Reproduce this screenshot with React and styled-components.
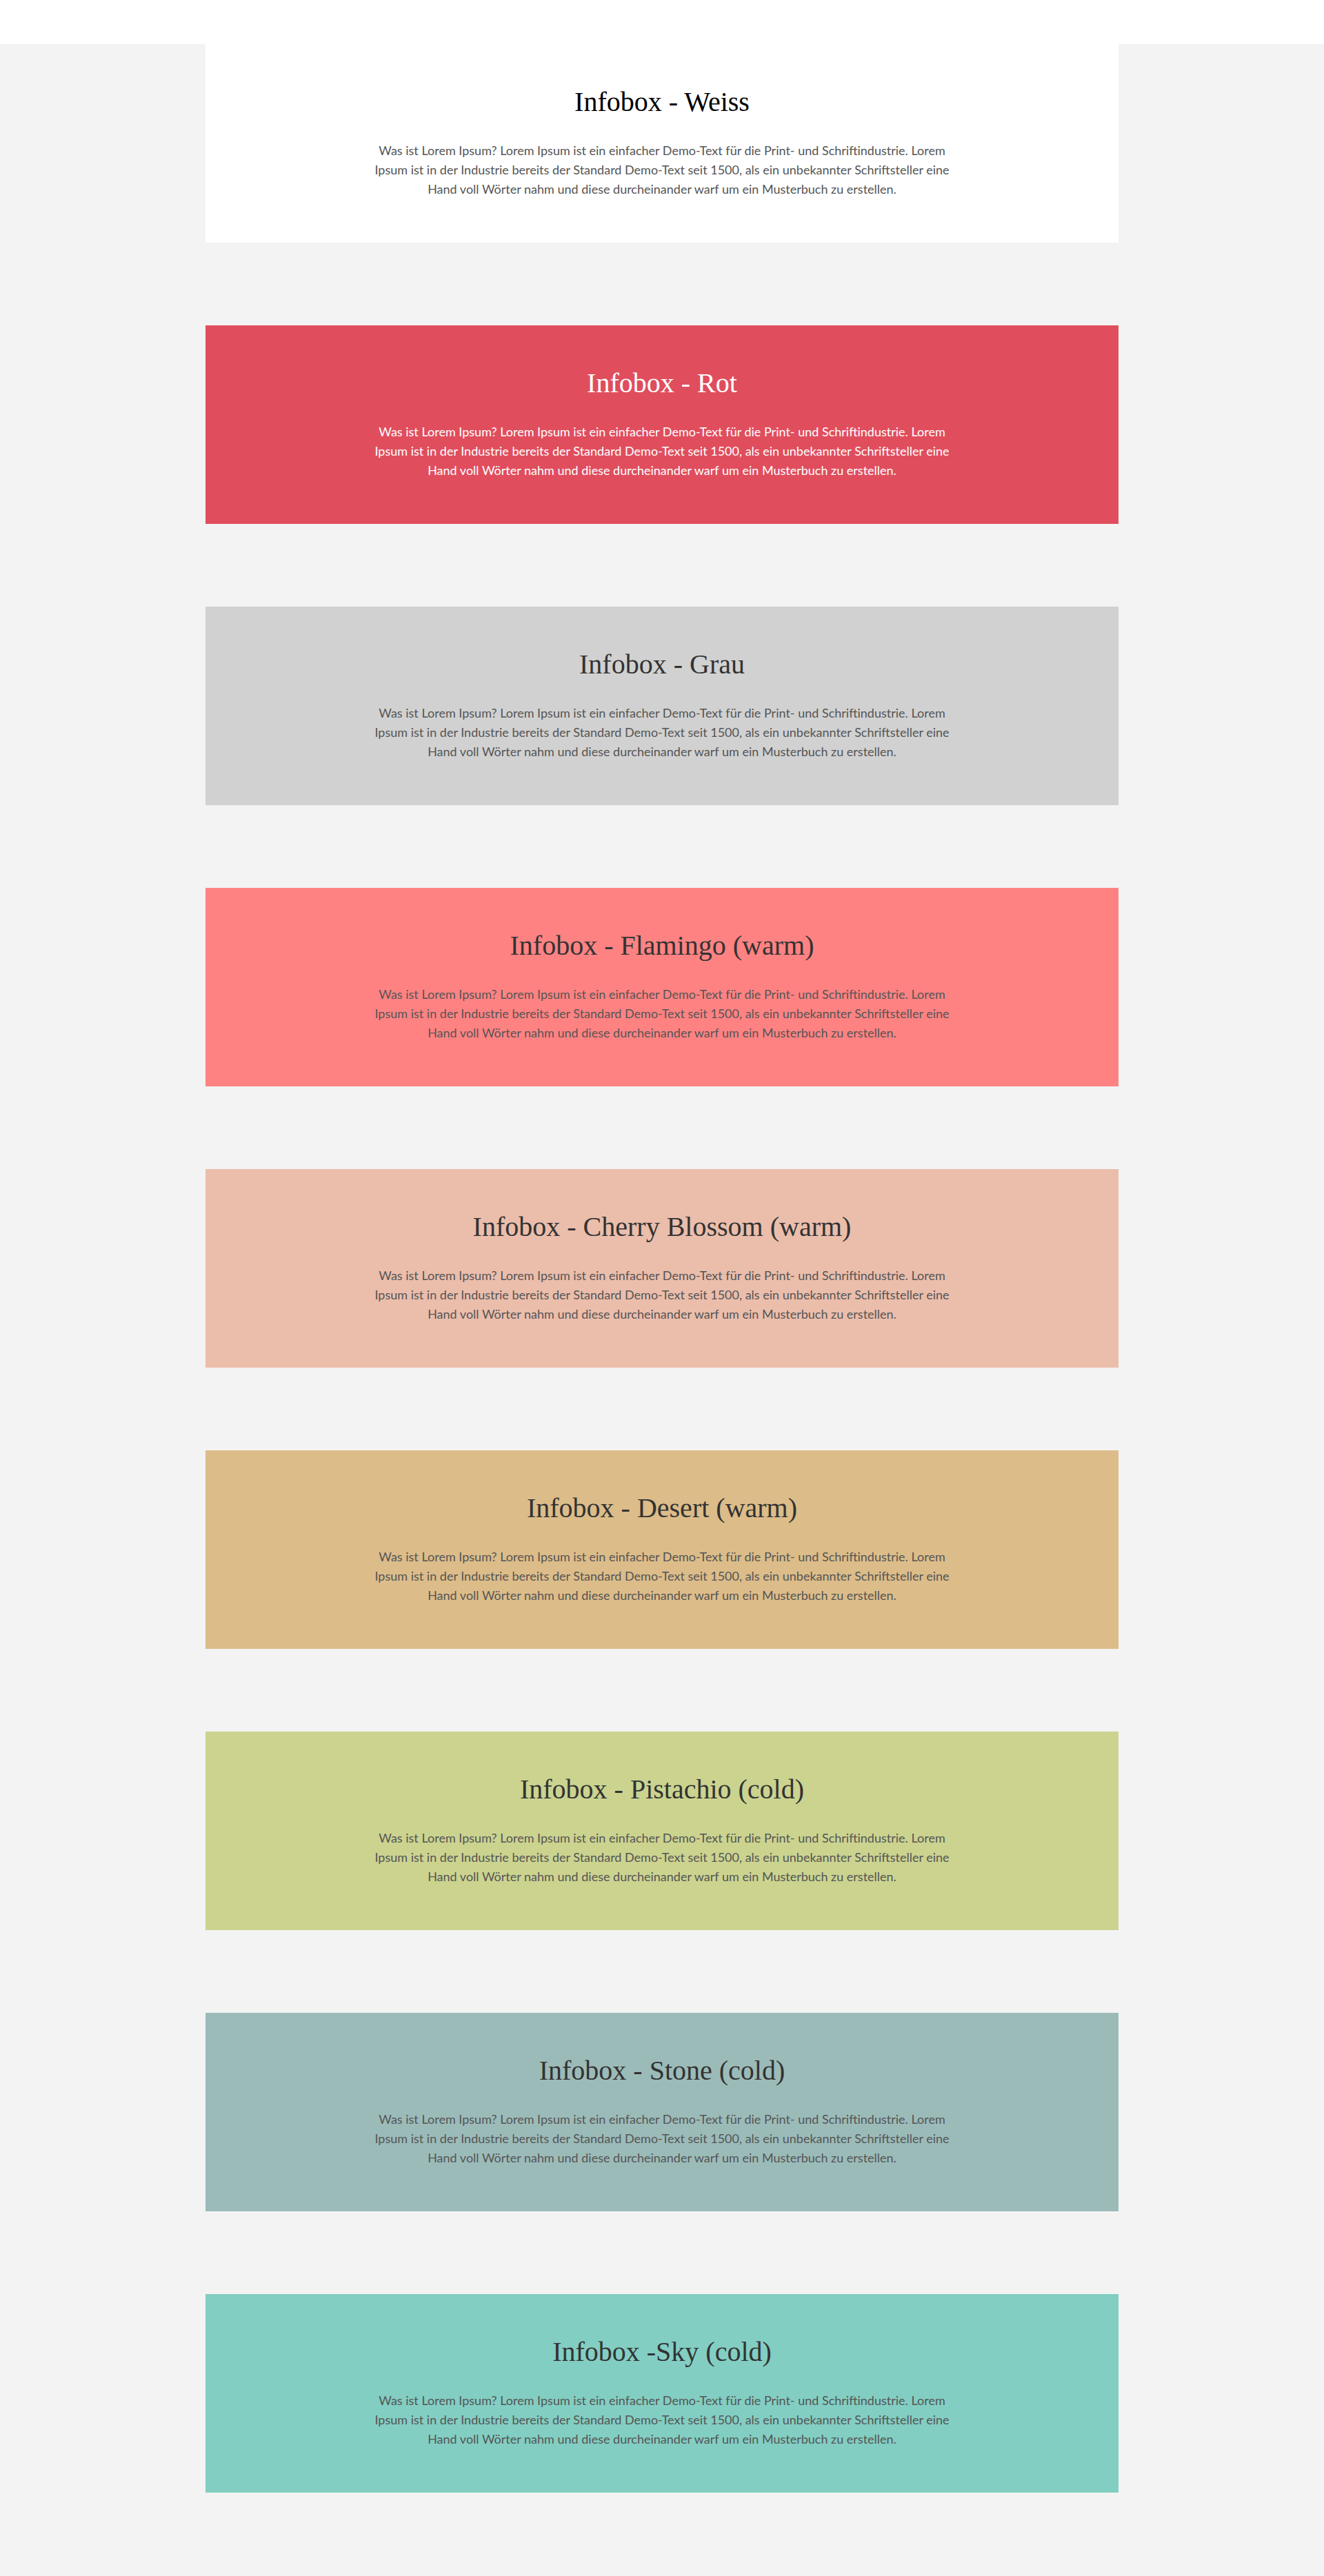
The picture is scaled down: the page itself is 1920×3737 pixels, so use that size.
import React from 'react';
import styled, { createGlobalStyle } from 'styled-components';

const GlobalStyle = createGlobalStyle`
  body {
    margin: 0;
    background-color: #f3f3f3;
    font-family: 'Lato', 'Liberation Sans', sans-serif;
  }
`;

const TopBar = styled.div`
  height: 64px;
  background-color: white;
`;

const Column = styled.main`
  width: 1324px;
  margin: 0 auto;
  display: flex;
  flex-direction: column;
  gap: 120px;
  padding-bottom: 121px;
`;

const Box = styled.section`
  height: 288px;
  box-sizing: border-box;
  padding: 60px 40px 0;
  display: flex;
  flex-direction: column;
  align-items: center;
  background-color: ${({ bg }) => bg};
`;

const Title = styled.h2`
  margin: 0;
  font-family: 'Liberation Serif', serif;
  font-weight: 400;
  font-size: 40px;
  line-height: 48px;
  color: ${({ color }) => color};
`;

const Text = styled.p`
  margin: 32px 0 0;
  max-width: 872px;
  text-align: center;
  font-size: 18px;
  line-height: 28px;
  color: ${({ color }) => color};
`;

const lorem =
  'Was ist Lorem Ipsum? Lorem Ipsum ist ein einfacher Demo-Text für die Print- und Schriftindustrie. Lorem Ipsum ist in der Industrie bereits der Standard Demo-Text seit 1500, als ein unbekannter Schriftsteller eine Hand voll Wörter nahm und diese durcheinander warf um ein Musterbuch zu erstellen.';

const boxes = [
  { title: 'Infobox - Weiss', bg: '#ffffff', titleColor: '#000', textColor: '#555' },
  { title: 'Infobox - Rot', bg: '#e04e5e', titleColor: '#fff', textColor: '#fff' },
  { title: 'Infobox - Grau', bg: '#d1d1d1', titleColor: '#333', textColor: '#555' },
  { title: 'Infobox - Flamingo (warm)', bg: '#fe8282', titleColor: '#333', textColor: '#555' },
  { title: 'Infobox - Cherry Blossom (warm)', bg: '#ebbdab', titleColor: '#333', textColor: '#555' },
  { title: 'Infobox - Desert (warm)', bg: '#dcbc89', titleColor: '#333', textColor: '#555' },
  { title: 'Infobox - Pistachio (cold)', bg: '#cbd38f', titleColor: '#333', textColor: '#555' },
  { title: 'Infobox - Stone (cold)', bg: '#9bbbb9', titleColor: '#333', textColor: '#555' },
  { title: 'Infobox -Sky (cold)', bg: '#82cec2', titleColor: '#333', textColor: '#555' },
];

const App = () => (
  <>
    <GlobalStyle />
    <TopBar />
    <Column>
      {boxes.map((box) => (
        <Box key={box.title} bg={box.bg}>
          <Title color={box.titleColor}>{box.title}</Title>
          <Text color={box.textColor}>{lorem}</Text>
        </Box>
      ))}
    </Column>
  </>
);

export default App;
